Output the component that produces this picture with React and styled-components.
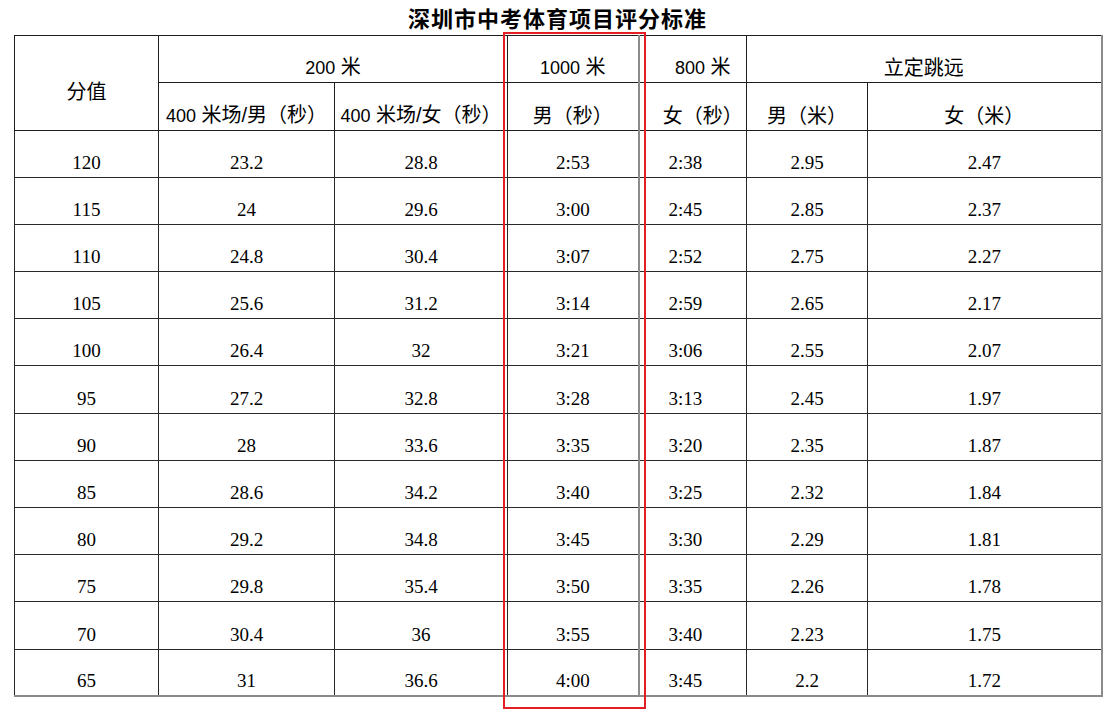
import React from 'react';
import styled, { createGlobalStyle } from 'styled-components';

const GlobalStyle = createGlobalStyle`
  html, body {
    margin: 0;
    padding: 0;
    background: #fff;
  }
  body {
    font-family: "Liberation Sans", "Noto Sans CJK SC", sans-serif;
    color: #000;
  }
`;

const Page = styled.div`
  width: 1087px;
  min-height: 715px;
  padding-left: 14px;
`;

const Title = styled.h1`
  margin: 0;
  height: 35px;
  line-height: 35px;
  text-align: center;
  font-family: "Noto Sans CJK SC", sans-serif;
  font-size: 22px;
  font-weight: 700;
  letter-spacing: 1px;
`;

const TableWrap = styled.div`
  position: relative;
  width: 1087px;
`;

const Table = styled.table`
  border-collapse: collapse;
  table-layout: fixed;
  width: 1087px;
  border-top: 1px solid #555;
  border-left: 1px solid #222;
  border-right: 2px solid #8a8a8a;
  border-bottom: 2px solid #8a8a8a;
`;

const Row = styled.tr`
  height: ${p => p.$h}px;
`;

const Head = styled.th`
  font-family: "Liberation Sans", "Noto Sans CJK SC", sans-serif;
  font-weight: 400;
  font-size: 20px;
  line-height: 22px;
  text-align: center;
  vertical-align: ${p => (p.$middle ? 'middle' : 'bottom')};
  padding: ${p => (p.$middle ? '18px 0 0' : `0 0 3px ${p.$shift || 0}px`)};
  border: 1px solid #1e1e1e;
  border-right: ${p => (p.$double ? '2px solid #8c8c8c' : '1px solid #1e1e1e')};
  white-space: nowrap;
`;

const Num = styled.span`
  font-size: 18px;
`;

const Cell = styled.td`
  font-family: "Liberation Serif", serif;
  font-size: 19px;
  line-height: 22px;
  text-align: center;
  vertical-align: bottom;
  padding: 0 ${p => p.$pullLeft || 0}px 3px 0;
  border: 1px solid #2a2a2a;
  border-right: ${p => (p.$double ? '2px solid #8c8c8c' : '1px solid #2a2a2a')};
`;

const Highlight = styled.div`
  position: absolute;
  left: 489px;
  top: -3px;
  width: 143px;
  height: 677px;
  box-sizing: border-box;
  border: 2px solid #e31e24;
  pointer-events: none;
`;

const widths = [144, 176, 173, 131, 108, 121, 234];

const rows = [
  ['120', '23.2', '28.8', '2:53', '2:38', '2.95', '2.47'],
  ['115', '24', '29.6', '3:00', '2:45', '2.85', '2.37'],
  ['110', '24.8', '30.4', '3:07', '2:52', '2.75', '2.27'],
  ['105', '25.6', '31.2', '3:14', '2:59', '2.65', '2.17'],
  ['100', '26.4', '32', '3:21', '3:06', '2.55', '2.07'],
  ['95', '27.2', '32.8', '3:28', '3:13', '2.45', '1.97'],
  ['90', '28', '33.6', '3:35', '3:20', '2.35', '1.87'],
  ['85', '28.6', '34.2', '3:40', '3:25', '2.32', '1.84'],
  ['80', '29.2', '34.8', '3:45', '3:30', '2.29', '1.81'],
  ['75', '29.8', '35.4', '3:50', '3:35', '2.26', '1.78'],
  ['70', '30.4', '36', '3:55', '3:40', '2.23', '1.75'],
  ['65', '31', '36.6', '4:00', '3:45', '2.2', '1.72'],
];

const App = () => {
  return (
    <Page>
      <GlobalStyle />
      <Title>深圳市中考体育项目评分标准</Title>
      <TableWrap>
        <Table>
          <colgroup>
            {widths.map((w, i) => <col key={i} style={{ width: w }} />)}
          </colgroup>
          <thead>
            <Row $h={47}>
              <Head rowSpan={2} $middle>分值</Head>
              <Head colSpan={2}><Num>200</Num> 米</Head>
              <Head $double><Num>1000</Num> 米</Head>
              <Head $shift={20}><Num>800</Num> 米</Head>
              <Head colSpan={2}>立定跳远</Head>
            </Row>
            <Row $h={47.5}>
              <Head><Num>400</Num> 米场/男（秒）</Head>
              <Head><Num>400</Num> 米场/女（秒）</Head>
              <Head $double>男（秒）</Head>
              <Head $shift={20}>女（秒）</Head>
              <Head>男（米）</Head>
              <Head>女（米）</Head>
            </Row>
          </thead>
          <tbody>
            {rows.map(r => (
              <Row key={r[0]} $h={47.2}>
                {r.map((v, i) => (
                  <Cell key={i} $double={i === 3} $pullLeft={i === 4 ? 15 : 0}>{v}</Cell>
                ))}
              </Row>
            ))}
          </tbody>
        </Table>
        <Highlight />
      </TableWrap>
    </Page>
  );
};

export default App;
